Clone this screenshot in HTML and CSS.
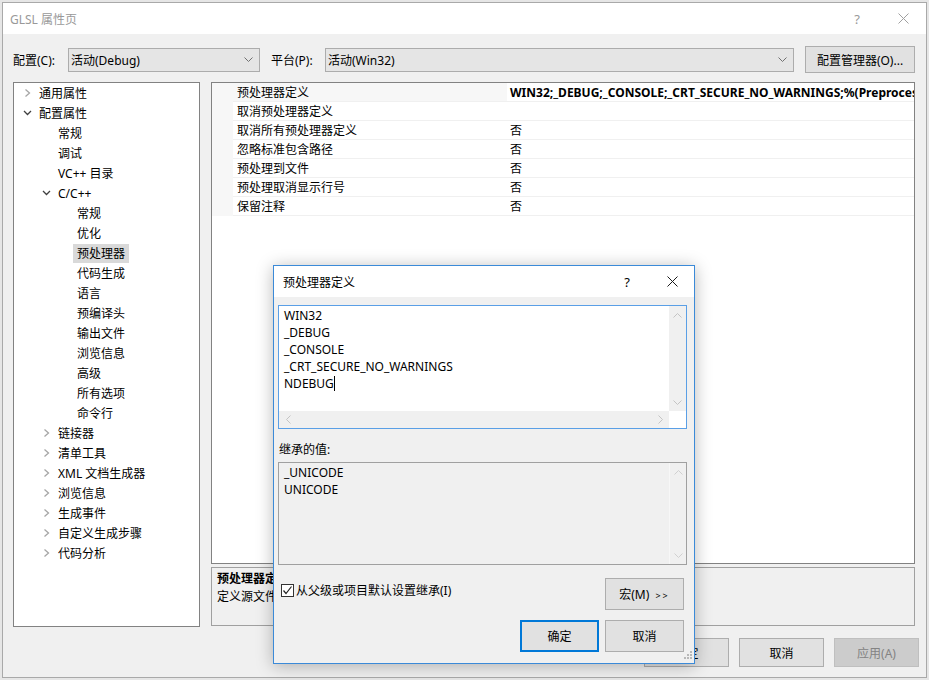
FILE: index.html
```html
<!DOCTYPE html>
<html lang="zh-CN">
<head>
  <meta charset="UTF-8">
  <title>GLSL 属性页</title>
  <link rel="stylesheet" href="styles.css">
</head>
<body>
  <div class="window">
    <div class="titlebar">
      <span class="title">GLSL 属性页</span>
      <span class="help">?</span>
      <span class="close">
        <svg width="11" height="11" viewBox="0 0 11 11"><path d="M0.5 0.5 L10.5 10.5 M10.5 0.5 L0.5 10.5" stroke="#a0a0a0" stroke-width="1"/></svg>
      </span>
    </div>

    <div class="toolbar">
      <span class="lbl lbl-config">配置(C):</span>
      <div class="select select-config">
        <span>活动(Debug)</span>
        <svg width="9" height="5" viewBox="0 0 9 5"><path d="M0.5 0.5 L4.5 4.5 L8.5 0.5" fill="none" stroke="#707070"/></svg>
      </div>
      <span class="lbl lbl-platform">平台(P):</span>
      <div class="select select-platform">
        <span>活动(Win32)</span>
        <svg width="9" height="5" viewBox="0 0 9 5"><path d="M0.5 0.5 L4.5 4.5 L8.5 0.5" fill="none" stroke="#707070"/></svg>
      </div>
      <button class="btn btn-manager">配置管理器(O)...</button>
    </div>

    <div class="main">
      <div class="tree">
        <div class="node lv0"><span class="chev chev-r"></span>通用属性</div>
        <div class="node lv0"><span class="chev chev-d"></span>配置属性</div>
        <div class="node lv1 leaf">常规</div>
        <div class="node lv1 leaf">调试</div>
        <div class="node lv1 leaf">VC++ 目录</div>
        <div class="node lv1"><span class="chev chev-d"></span>C/C++</div>
        <div class="node lv2">常规</div>
        <div class="node lv2">优化</div>
        <div class="node lv2"><span class="sel">预处理器</span></div>
        <div class="node lv2">代码生成</div>
        <div class="node lv2">语言</div>
        <div class="node lv2">预编译头</div>
        <div class="node lv2">输出文件</div>
        <div class="node lv2">浏览信息</div>
        <div class="node lv2">高级</div>
        <div class="node lv2">所有选项</div>
        <div class="node lv2">命令行</div>
        <div class="node lv1"><span class="chev chev-r"></span>链接器</div>
        <div class="node lv1"><span class="chev chev-r"></span>清单工具</div>
        <div class="node lv1"><span class="chev chev-r"></span>XML 文档生成器</div>
        <div class="node lv1"><span class="chev chev-r"></span>浏览信息</div>
        <div class="node lv1"><span class="chev chev-r"></span>生成事件</div>
        <div class="node lv1"><span class="chev chev-r"></span>自定义生成步骤</div>
        <div class="node lv1"><span class="chev chev-r"></span>代码分析</div>
      </div>

      <div class="side">
        <div class="grid">
          <div class="row current">
            <span class="gutter"></span>
            <span class="name">预处理器定义</span>
            <span class="value bold">WIN32;_DEBUG;_CONSOLE;_CRT_SECURE_NO_WARNINGS;%(PreprocessorDefinitions)</span>
          </div>
          <div class="row">
            <span class="gutter"></span>
            <span class="name">取消预处理器定义</span>
            <span class="value"></span>
          </div>
          <div class="row">
            <span class="gutter"></span>
            <span class="name">取消所有预处理器定义</span>
            <span class="value">否</span>
          </div>
          <div class="row">
            <span class="gutter"></span>
            <span class="name">忽略标准包含路径</span>
            <span class="value">否</span>
          </div>
          <div class="row">
            <span class="gutter"></span>
            <span class="name">预处理到文件</span>
            <span class="value">否</span>
          </div>
          <div class="row">
            <span class="gutter"></span>
            <span class="name">预处理取消显示行号</span>
            <span class="value">否</span>
          </div>
          <div class="row">
            <span class="gutter"></span>
            <span class="name">保留注释</span>
            <span class="value">否</span>
          </div>
        </div>
        <div class="desc">
          <div class="desc-title">预处理器定义</div>
          <div class="desc-text">定义源文件的预处理符号。</div>
        </div>
      </div>
    </div>

    <div class="footer">
      <button class="btn">确定</button>
      <button class="btn">取消</button>
      <button class="btn disabled">应用(A)</button>
    </div>
  </div>

  <div class="dialog">
    <div class="dlg-titlebar">
      <span class="title">预处理器定义</span>
      <span class="help">?</span>
      <span class="close">
        <svg width="11" height="11" viewBox="0 0 11 11"><path d="M0.5 0.5 L10.5 10.5 M10.5 0.5 L0.5 10.5" stroke="#1a1a1a" stroke-width="1"/></svg>
      </span>
    </div>
    <div class="dlg-body">
      <div class="editbox focused">
        <div class="edit-content">
          <div>WIN32</div>
          <div>_DEBUG</div>
          <div>_CONSOLE</div>
          <div>_CRT_SECURE_NO_WARNINGS</div>
          <div>NDEBUG<span class="caret"></span></div>
        </div>
        <div class="vscroll">
          <svg width="9" height="5" viewBox="0 0 9 5"><path d="M0.5 4.5 L4.5 0.5 L8.5 4.5" fill="none" stroke="#c4c4c4"/></svg>
          <svg width="9" height="5" viewBox="0 0 9 5"><path d="M0.5 0.5 L4.5 4.5 L8.5 0.5" fill="none" stroke="#c4c4c4"/></svg>
        </div>
        <div class="hscroll">
          <svg width="5" height="9" viewBox="0 0 5 9"><path d="M4.5 0.5 L0.5 4.5 L4.5 8.5" fill="none" stroke="#c4c4c4"/></svg>
          <svg width="5" height="9" viewBox="0 0 5 9"><path d="M0.5 0.5 L4.5 4.5 L0.5 8.5" fill="none" stroke="#c4c4c4"/></svg>
        </div>
        <div class="corner"></div>
      </div>

      <div class="inh-label">继承的值:</div>
      <div class="editbox readonly">
        <div class="edit-content">
          <div>_UNICODE</div>
          <div>UNICODE</div>
        </div>
        <div class="vscroll full">
          <svg width="9" height="5" viewBox="0 0 9 5"><path d="M0.5 4.5 L4.5 0.5 L8.5 4.5" fill="none" stroke="#d0d0d0"/></svg>
          <svg width="9" height="5" viewBox="0 0 9 5"><path d="M0.5 0.5 L4.5 4.5 L8.5 0.5" fill="none" stroke="#d0d0d0"/></svg>
        </div>
      </div>

      <div class="dlg-row">
        <label class="check">
          <span class="box">
            <svg width="11" height="11" viewBox="0 0 11 11"><path d="M1.5 5.5 L4 8.5 L9.5 1.5" fill="none" stroke="#222" stroke-width="1.2"/></svg>
          </span>
          从父级或项目默认设置继承(I)
        </label>
        <button class="btn dlg-btn">宏(M) <span class="arrows">&gt;&gt;</span></button>
      </div>

      <div class="dlg-actions">
        <button class="btn dlg-btn default">确定</button>
        <button class="btn dlg-btn">取消</button>
      </div>
    </div>
    <svg class="grip" width="11" height="11" viewBox="0 0 11 11">
      <g fill="#b8b8b8">
        <rect x="8" y="0" width="2" height="2"/>
        <rect x="5" y="3" width="2" height="2"/><rect x="8" y="3" width="2" height="2"/>
        <rect x="2" y="6" width="2" height="2"/><rect x="5" y="6" width="2" height="2"/><rect x="8" y="6" width="2" height="2"/>
      </g>
    </svg>
  </div>
</body>
</html>
```

FILE: styles.css
```css
* {
  box-sizing: border-box;
}
body {
  margin: 0;
  width: 929px;
  height: 680px;
  overflow: hidden;
  position: relative;
  background: #e6e6e6;
  font-family: "Noto Sans", "Noto Sans CJK SC", sans-serif;
  font-size: 12px;
  color: #000;
}
button {
  font-family: inherit;
  font-size: 12px;
  color: #000;
  padding: 0;
}

/* main property window */
.window {
  margin: 2px 0 0 2px;
  width: 925px;
  height: 676px;
  border: 1px solid #a9a9a9;
  background: #f0f0f0;
  display: flex;
  flex-direction: column;
}
.titlebar {
  height: 31px;
  flex-shrink: 0;
  background: #fff;
  display: flex;
  align-items: center;
  padding-left: 7px;
  color: #999;
}
.titlebar .title {
  flex: 1;
}
.help {
  width: 46px;
  text-align: center;
  font-size: 13px;
}
.close {
  width: 46px;
  display: flex;
  justify-content: center;
  align-items: center;
}

.toolbar {
  display: flex;
  align-items: center;
  height: 27px;
  margin-top: 12px;
  padding-left: 10px;
  flex-shrink: 0;
}
.lbl-config {
  width: 55px;
}
.lbl-platform {
  width: 54px;
  margin-left: 11px;
}
.select {
  height: 24px;
  border: 1px solid #acacac;
  background: #e5e5e5;
  display: flex;
  align-items: center;
  justify-content: space-between;
  padding: 0 6px 0 2px;
}
.select-config {
  width: 192px;
}
.select-platform {
  width: 469px;
}
.btn {
  border: 1px solid #adadad;
  background: #e1e1e1;
  cursor: default;
}
.btn-manager {
  width: 110px;
  height: 27px;
  margin-left: 11px;
}

.main {
  display: flex;
  margin-top: 9px;
  padding-left: 10px;
  height: 545px;
  flex-shrink: 0;
}
.tree {
  width: 187px;
  height: 545px;
  background: #fff;
  border: 1px solid #828282;
}
.node {
  height: 20px;
  display: flex;
  align-items: center;
  white-space: nowrap;
}
.lv0 { padding-left: 9px; }
.lv1 { padding-left: 28px; }
.lv1.leaf { padding-left: 44px; }
.lv2 { padding-left: 63px; }
.chev {
  width: 9px;
  height: 10px;
  margin-right: 7px;
  background-repeat: no-repeat;
  background-position: center;
}
.chev-r {
  background-image: url("data:image/svg+xml,%3Csvg xmlns='http://www.w3.org/2000/svg' width='9' height='10'%3E%3Cpath d='M2.5 1.5 L6.5 5 L2.5 8.5' fill='none' stroke='%23a6a6a6' stroke-width='1.3'/%3E%3C/svg%3E");
}
.chev-d {
  background-image: url("data:image/svg+xml,%3Csvg xmlns='http://www.w3.org/2000/svg' width='9' height='10'%3E%3Cpath d='M1 3 L4.5 6.5 L8 3' fill='none' stroke='%23404040' stroke-width='1.3'/%3E%3C/svg%3E");
}
.sel {
  background: #d9d9d9;
  margin-left: -4px;
  padding: 0 4px;
  line-height: 19px;
}

.side {
  width: 704px;
  margin-left: 11px;
  display: flex;
  flex-direction: column;
}
.grid {
  height: 482px;
  background: #fff;
  border: 1px solid #828282;
}
.row {
  display: flex;
  height: 19px;
}
.gutter {
  width: 21px;
  background: #f7f7f7;
}
.name,
.value {
  padding-top: 1px;
  line-height: 17px;
  border-bottom: 1px solid #f0f0f0;
  white-space: nowrap;
}
.name {
  width: 274px;
  padding-left: 4px;
}
.current .name {
  background: #f7f7f7;
}
.value {
  flex: 1;
  padding-left: 3px;
  overflow: hidden;
}
.bold {
  font-weight: bold;
}
.desc {
  height: 59px;
  margin-top: 3px;
  border: 1px solid #a0a0a0;
  padding: 2px 5px;
  line-height: 18px;
}
.desc-title {
  font-weight: bold;
}

.footer {
  display: flex;
  justify-content: flex-end;
  gap: 10px;
  padding-right: 7px;
  margin-top: 11px;
}
.footer .btn {
  width: 85px;
  height: 29px;
}
.btn.disabled {
  background: #cccccc;
  border-color: #bfbfbf;
  color: #838383;
}

/* modal dialog on top */
.dialog {
  position: absolute;
  left: 273px;
  top: 265px;
  width: 422px;
  height: 399px;
  background: #f0f0f0;
  border: 1px solid #3b8ad8;
  box-shadow: 0 2px 16px rgba(0, 0, 0, 0.28);
}
.dlg-titlebar {
  height: 31px;
  background: #fff;
  display: flex;
  align-items: center;
  padding-left: 9px;
}
.dlg-titlebar .title {
  flex: 1;
}
.dlg-titlebar .help {
  width: 46px;
}
.dlg-titlebar .close {
  width: 44px;
}
.dlg-body {
  padding: 8px 7px 0 4px;
}
.editbox {
  position: relative;
  height: 124px;
  border: 1px solid #a0a0a0;
  background: #f0f0f0;
}
.editbox.focused {
  border-color: #5a9fe6;
  background: #fff;
}
.editbox.readonly {
  height: 103px;
}
.edit-content {
  padding: 1px 0 0 5px;
  line-height: 17px;
}
.caret {
  display: inline-block;
  width: 1px;
  height: 15px;
  background: #000;
  vertical-align: -3px;
}
.vscroll {
  position: absolute;
  right: 0;
  top: 0;
  width: 17px;
  bottom: 17px;
  background: #f0f0f0;
  display: flex;
  flex-direction: column;
  justify-content: space-between;
  align-items: center;
  padding: 7px 0 6px;
}
.vscroll.full {
  bottom: 0;
  border-left: 1px solid #f7f7f7;
}
.hscroll {
  position: absolute;
  left: 0;
  right: 17px;
  bottom: 0;
  height: 17px;
  background: #f0f0f0;
  display: flex;
  justify-content: space-between;
  align-items: center;
  padding: 0 6px 0 7px;
}
.corner {
  position: absolute;
  right: 0;
  bottom: 0;
  width: 17px;
  height: 17px;
  background: #fff;
}
.inh-label {
  margin-top: 12px;
  line-height: 17px;
  margin-bottom: 4px;
  padding-left: 1px;
}
.dlg-row {
  display: flex;
  justify-content: space-between;
  align-items: flex-start;
  margin-top: 13px;
  padding-right: 3px;
}
.check {
  display: flex;
  align-items: center;
  margin-top: 3px;
  margin-left: 3px;
}
.box {
  width: 13px;
  height: 13px;
  border: 1px solid #333;
  background: #fff;
  display: flex;
  align-items: center;
  justify-content: center;
  margin-right: 2px;
}
.dlg-btn {
  width: 79px;
  height: 32px;
}
.arrows {
  font-size: 9px;
  letter-spacing: 2px;
  margin-left: 3px;
}
.dlg-actions {
  display: flex;
  justify-content: flex-end;
  gap: 6px;
  margin-top: 10px;
  padding-right: 3px;
}
.btn.default {
  border: 2px solid #0078d7;
}
.grip {
  position: absolute;
  right: 1px;
  bottom: 1px;
}
```
